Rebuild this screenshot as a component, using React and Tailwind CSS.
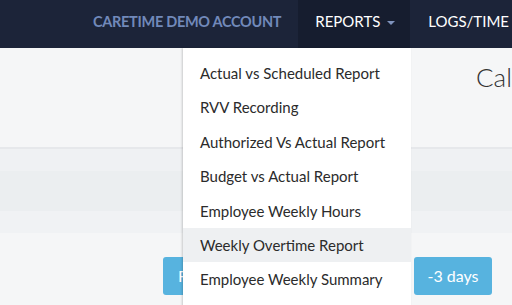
const reportItems = [
  'Actual vs Scheduled Report',
  'RVV Recording',
  'Authorized Vs Actual Report',
  'Budget vs Actual Report',
  'Employee Weekly Hours',
  'Weekly Overtime Report',
  'Employee Weekly Summary',
  'Client Hours Report',
]

function App() {
  return (
    <div className="relative h-[305px] w-[512px] overflow-hidden bg-[#f5f6f7] font-['Lato',sans-serif]">
      {/* Navbar */}
      <nav className="flex h-[48px] items-stretch whitespace-nowrap bg-[#1c2439] pl-[76px]">
        <div className="flex items-center px-[17px] pb-[5px] text-[14.5px] font-bold tracking-[-0.3px] text-[#7189ba]">
          CARETIME DEMO ACCOUNT
        </div>
        <div className="flex w-[112px] items-center gap-[7px] bg-[#161d2f] px-[17px] pb-[5px] text-[15px] text-white">
          REPORTS
          <span className="mt-[2px] h-0 w-0 border-x-[4px] border-t-[4px] border-x-transparent border-t-[#7f93bd]" />
        </div>
        <div className="flex items-center px-[18px] pb-[5px] text-[15px] text-white">LOGS/TIME CLOCK</div>
      </nav>

      {/* Page */}
      <div className="flex h-[99px] items-start justify-start pl-[476px] pt-[10px]">
        <h1 className="whitespace-nowrap text-[26px] font-light text-[#333]">Calendar</h1>
      </div>
      <div className="h-[2px] bg-[#e6e8eb]" />
      <div className="h-[22px] bg-[#eff1f3]" />
      <div className="h-[40px] bg-[#ebeef0]" />
      <div className="h-[22px] bg-[#f0f2f4]" />
      <div className="flex gap-[10px] pl-[163px] pt-[24px]">
        <button className="flex h-[38px] w-[241px] items-center rounded-[3px] bg-[#57b3df] px-[15px] text-[16px] text-white">
          Fix
        </button>
        <button className="flex h-[38px] w-[78px] items-center justify-center rounded-[3px] bg-[#57b3df] text-[16px] text-white">
          -3 days
        </button>
      </div>

      {/* Reports dropdown */}
      <div className="absolute left-[183px] top-[48px] w-[228px] bg-white pt-[8px] shadow-[-1px_0_2px_rgba(0,0,0,0.18)]">
        {reportItems.map((item) => (
          <div
            key={item}
            className={`flex h-[34.4px] items-center whitespace-nowrap pl-[17px] text-[15px] text-[#2b2b2b] ${
              item === 'Weekly Overtime Report' ? 'bg-[#eef0f2]' : ''
            }`}
          >
            {item}
          </div>
        ))}
      </div>
    </div>
  )
}

export default App
